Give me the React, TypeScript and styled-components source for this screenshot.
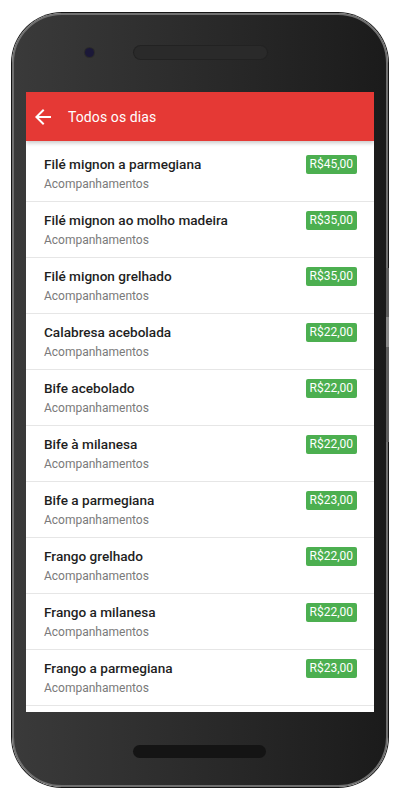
import React from "react";
import styled, { createGlobalStyle } from "styled-components";

const Global = createGlobalStyle`
  html, body { margin: 0; padding: 0; background: #ffffff; }
  body { font-family: Roboto, "Noto Sans", "Liberation Sans", sans-serif; }
  * { box-sizing: border-box; }
`;

const Page = styled.div`
  width: 400px;
  height: 800px;
  padding: 13px 12px 13px 12px;
  background: #fff;
`;

const Phone = styled.div`
  position: relative;
  width: 376px;
  height: 774px;
  border-radius: 50px;
  border: 2px solid #707070;
  box-shadow: 0 0 0 1px #151515;
  background: linear-gradient(90deg, #3a3a3a 0%, #2c2c2c 45%, #1b1b1b 100%);
  display: flex;
  flex-direction: column;
  align-items: center;
`;

const TopBezel = styled.div`
  height: 77px;
  width: 100%;
  display: flex;
  align-items: flex-start;
  padding-top: 31px;
  padding-left: 71px;
  gap: 40px;
`;

const Camera = styled.div`
  width: 9px;
  height: 9px;
  margin-top: 2px;
  border-radius: 50%;
  background: #1b1838;
  box-shadow: 0 0 0 1px #2a2a2a;
`;

const Speaker = styled.div<{ $dark?: boolean }>`
  width: 133px;
  height: 13px;
  border-radius: 7px;
  background: ${(p) => (p.$dark ? "#141414" : "#2a2a2a")};
  box-shadow: ${(p) => (p.$dark ? "none" : "0 0 0 1px #222")};
`;

const BottomBezel = styled.div`
  flex: 1;
  width: 100%;
  display: flex;
  justify-content: center;
  padding-top: 33px;
  padding-right: 1px;
`;

const SideButton = styled.div<{ $top: number; $h: number; $light?: boolean }>`
  position: absolute;
  right: -3px;
  top: ${(p) => p.$top}px;
  width: 3px;
  height: ${(p) => p.$h}px;
  background: ${(p) => (p.$light ? "#8a8a8a" : "#606060")};
`;

const Screen = styled.div`
  width: 348px;
  height: 620px;
  background: #ffffff;
  overflow: hidden;
  display: flex;
  flex-direction: column;
`;

const AppBar = styled.div`
  height: 49px;
  flex-shrink: 0;
  background: #e53935;
  display: flex;
  align-items: center;
  padding-left: 5px;
  gap: 13px;
  color: #fff;
  position: relative;
  z-index: 1;
  box-shadow: 0 2px 4px rgba(0, 0, 0, 0.22);
`;

const BackIcon = styled.svg`
  width: 24px;
  height: 24px;
  fill: #ffffff;
`;

const Title = styled.div`
  font-family: Roboto, "Liberation Sans", sans-serif;
  font-size: 14px;
  font-weight: 400;
  color: #ffffff;
  letter-spacing: 0.1px;
`;

const List = styled.div`
  padding-top: 5px;
  display: flex;
  flex-direction: column;
`;

const Row = styled.div`
  height: 56px;
  flex-shrink: 0;
  border-bottom: 1px solid #e6e6e6;
  display: flex;
  justify-content: space-between;
  align-items: flex-start;
  padding: 9px 17px 0 18px;
`;

const Texts = styled.div`
  display: flex;
  flex-direction: column;
  gap: 2px;
`;

const ItemTitle = styled.div`
  font-size: 13.6px;
  line-height: 18px;
  font-weight: 500;
  color: #1f1f1f;
`;

const ItemSub = styled.div`
  font-size: 12px;
  line-height: 18px;
  color: #7a7a7a;
`;

const Price = styled.div`
  height: 19px;
  padding: 0 4px;
  border-radius: 2px;
  background: #4caf50;
  color: #ffffff;
  font-size: 12px;
  line-height: 19px;
`;

const items: [string, string][] = [
  ["Filé mignon a parmegiana", "R$45,00"],
  ["Filé mignon ao molho madeira", "R$35,00"],
  ["Filé mignon grelhado", "R$35,00"],
  ["Calabresa acebolada", "R$22,00"],
  ["Bife acebolado", "R$22,00"],
  ["Bife à milanesa", "R$22,00"],
  ["Bife a parmegiana", "R$23,00"],
  ["Frango grelhado", "R$22,00"],
  ["Frango a milanesa", "R$22,00"],
  ["Frango a parmegiana", "R$23,00"],
];

export default function App() {
  return (
    <>
      <Global />
      <Page>
        <Phone>
          <SideButton $top={253} $h={49} />
          <SideButton $top={302} $h={30} $light />
          <SideButton $top={332} $h={95} />
          <TopBezel>
            <Camera />
            <Speaker />
          </TopBezel>
          <Screen>
            <AppBar>
              <BackIcon viewBox="0 0 24 24">
                <path d="M20 11H7.83l5.59-5.59L12 4l-8 8 8 8 1.41-1.41L7.83 13H20v-2z" />
              </BackIcon>
              <Title>Todos os dias</Title>
            </AppBar>
            <List>
              {items.map(([name, price]) => (
                <Row key={name}>
                  <Texts>
                    <ItemTitle>{name}</ItemTitle>
                    <ItemSub>Acompanhamentos</ItemSub>
                  </Texts>
                  <Price>{price}</Price>
                </Row>
              ))}
            </List>
          </Screen>
          <BottomBezel>
            <Speaker $dark />
          </BottomBezel>
        </Phone>
      </Page>
    </>
  );
}
